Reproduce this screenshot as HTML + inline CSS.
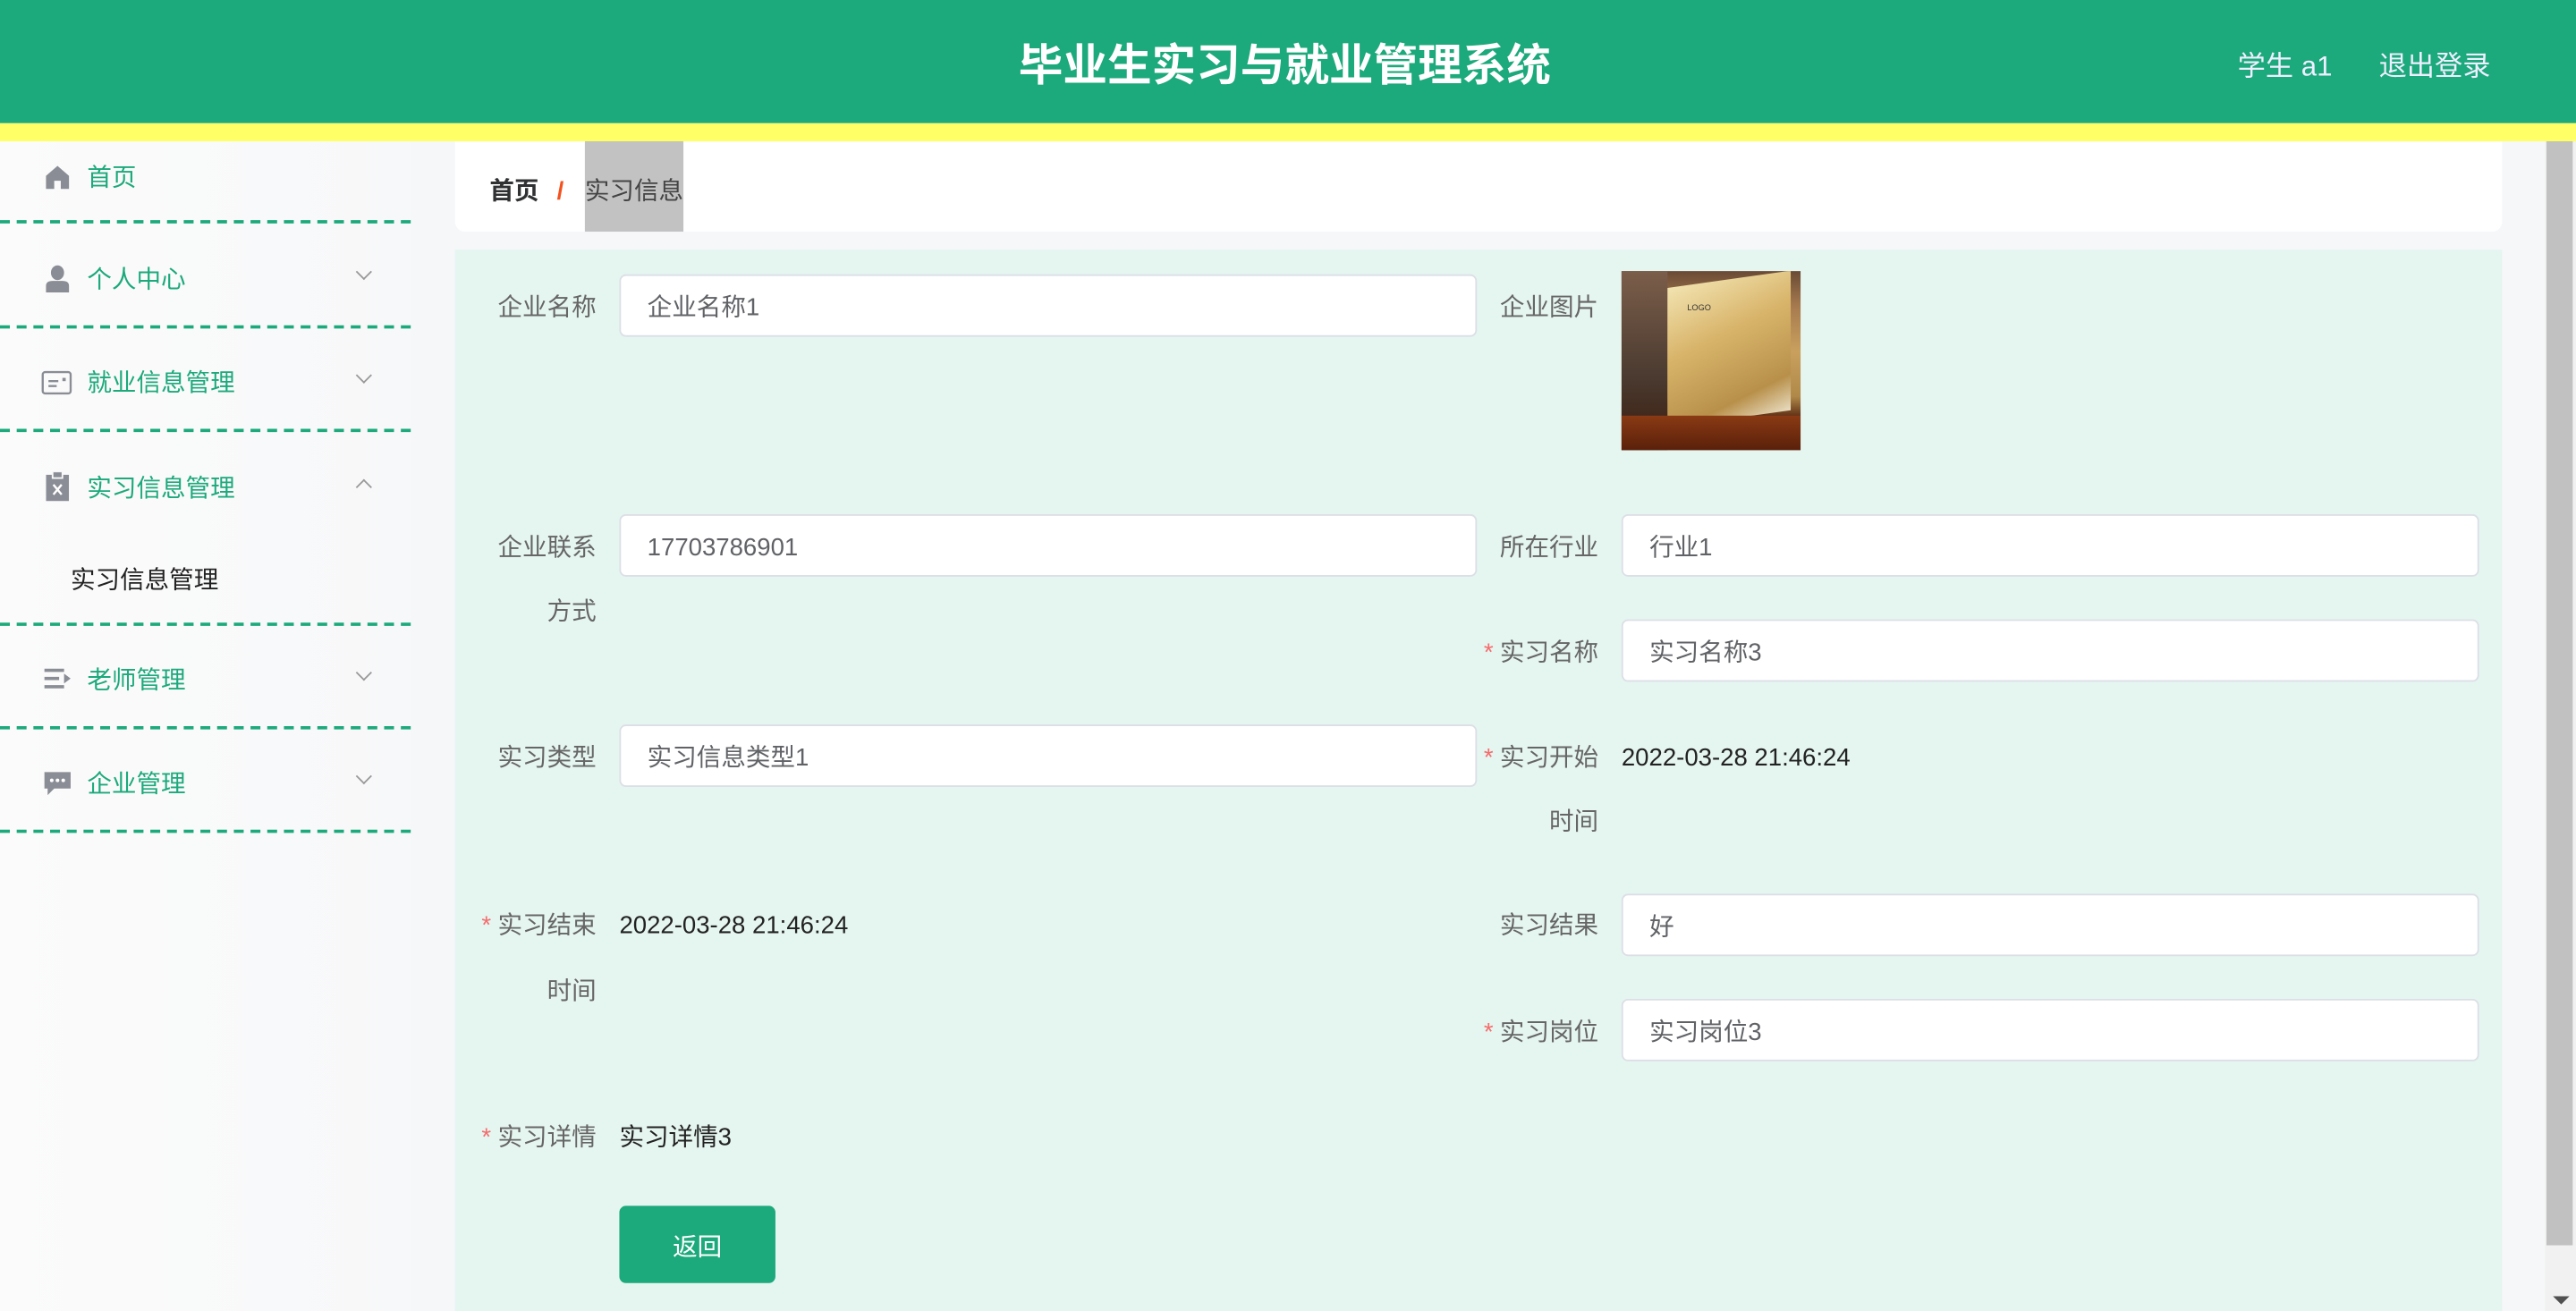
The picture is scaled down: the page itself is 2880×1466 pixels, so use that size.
<!DOCTYPE html>
<html><head><meta charset="utf-8"><style>
*{margin:0;padding:0;box-sizing:border-box}
html,body{width:2880px;height:1466px;overflow:hidden;background:#f5f7f9}
#w{position:absolute;left:0;top:0;width:1568px;height:798px;transform:scale(1.83673,1.8371);transform-origin:0 0;font-family:"Liberation Sans","Noto Sans CJK SC",sans-serif;background:#f5f7f9}
.a{position:absolute;white-space:nowrap}
.hd{left:0;top:0;width:1568px;height:75px;background:#1ca97b}
.ys{left:0;top:75px;width:1568px;height:11px;background:#ffff66}
.sb{left:0;top:86px;width:250px;height:712px;background:linear-gradient(90deg,#fbfbfb,#f7f8f9)}
.mi{font-size:15px;color:#1ca97b;line-height:20px;padding-top:2px}
.dl{left:0;width:250px;height:0;border-top:2px dashed #1ca97b}
.ch{width:7px;height:7px;border-right:1px solid #999;border-bottom:1px solid #999;transform:rotate(45deg)}
.lb{font-size:15px;color:#666;line-height:20px;text-align:right;padding-top:2px}
.st{color:#f56c6c;margin-right:4px}
.in{height:38px;background:#fff;border:1px solid #dcdfe6;border-radius:4px;font-size:15px;color:#606266;padding-left:16px;padding-top:3px;line-height:34px}
.tx{font-size:15px;color:#222;line-height:20px;padding-top:2px}
</style></head><body><div id="w">
<div class="a hd"></div>
<div class="a" style="left:0;top:22px;width:1568px;text-align:center;font-size:27px;font-weight:bold;color:#fff;line-height:36px;padding-right:4px">毕业生实习与就业管理系统</div>
<div class="a" style="left:1362px;top:30px;font-size:17px;color:#eef;line-height:22px">学生 a1</div>
<div class="a" style="left:1448px;top:30px;font-size:17px;color:#eef;line-height:22px">退出登录</div>
<div class="a ys"></div>
<div class="a sb"></div>

<svg class="a" style="left:27px;top:100px" width="16" height="16" viewBox="0 0 16 16"><path d="M8 1 L15 7 V15 H10 V10 H6 V15 H1 V7 Z" fill="#8a8d95"/></svg>
<div class="a mi" style="left:53px;top:97px">首页</div>
<div class="a dl" style="top:134px"></div>

<svg class="a" style="left:27px;top:161px" width="16" height="17" viewBox="0 0 16 17"><ellipse cx="8" cy="5" rx="4" ry="4.5" fill="#8a8d95"/><path d="M1 17 V13 Q1 10 5 10 H11 Q15 10 15 13 V17Z" fill="#8a8d95"/></svg>
<div class="a mi" style="left:53px;top:159px">个人中心</div>
<div class="a ch" style="left:218px;top:162px"></div>
<div class="a dl" style="top:198px"></div>

<svg class="a" style="left:25px;top:225px" width="19" height="16" viewBox="0 0 19 16"><rect x="1" y="1.5" width="17" height="13" rx="1.5" fill="none" stroke="#8a8d95" stroke-width="1.3"/><path d="M4.5 7h6M4.5 10h5" stroke="#8a8d95" stroke-width="1.3"/><rect x="13" y="5" width="2" height="2" fill="#8a8d95"/></svg>
<div class="a mi" style="left:53px;top:222px">就业信息管理</div>
<div class="a ch" style="left:218px;top:225px"></div>
<div class="a dl" style="top:261px"></div>

<svg class="a" style="left:28px;top:287px" width="14" height="18" viewBox="0 0 14 18"><rect x="0" y="2" width="14" height="16" fill="#8a8d95"/><rect x="4" y="0" width="6" height="4" fill="#8a8d95" stroke="#fafafa" stroke-width="1"/><path d="M4.5 8l5 6M9.5 8l-5 6" stroke="#fff" stroke-width="1.3"/></svg>
<div class="a mi" style="left:53px;top:286px">实习信息管理</div>
<div class="a ch" style="left:218px;top:293px;transform:rotate(225deg)"></div>
<div class="a" style="left:43px;top:344px;font-size:15px;color:#222;line-height:20px">实习信息管理</div>
<div class="a dl" style="top:379px"></div>

<svg class="a" style="left:27px;top:406px" width="16" height="14" viewBox="0 0 16 14"><path d="M0 2h12M0 7h9M0 12h12" stroke="#8a8d95" stroke-width="2"/><path d="M12 4l4 3-4 3z" fill="#8a8d95"/></svg>
<div class="a mi" style="left:53px;top:403px">老师管理</div>
<div class="a ch" style="left:218px;top:406px"></div>
<div class="a dl" style="top:442px"></div>

<svg class="a" style="left:27px;top:469px" width="16" height="15" viewBox="0 0 16 15"><path d="M0 1h16v10H6l-4 4v-4H0z" fill="#8a8d95"/><circle cx="4.5" cy="6" r="1.1" fill="#fff"/><circle cx="8" cy="6" r="1.1" fill="#fff"/><circle cx="11.5" cy="6" r="1.1" fill="#fff"/></svg>
<div class="a mi" style="left:53px;top:466px">企业管理</div>
<div class="a ch" style="left:218px;top:469px"></div>
<div class="a dl" style="top:505px"></div>

<div class="a" style="left:277px;top:86px;width:1246px;height:55px;background:#fff;border-radius:0 0 6px 6px"></div>
<div class="a" style="left:356px;top:86px;width:60px;height:55px;background:#c2c2c2"></div>
<div class="a" style="left:298px;top:107px;font-size:15px;font-weight:bold;color:#303133;line-height:20px">首页</div>
<div class="a" style="left:339px;top:107px;font-size:15px;font-weight:bold;color:#f4511e;line-height:20px">/</div>
<div class="a" style="left:356px;top:107px;font-size:15px;color:#444;line-height:20px">实习信息</div>

<div class="a" style="left:277px;top:152px;width:1246px;height:646px;background:#e5f5f0"></div>

<div class="a lb" style="left:283px;top:176px;width:80px">企业名称</div>
<div class="a in" style="left:377px;top:167px;width:522px">企业名称1</div>
<div class="a lb" style="left:893px;top:176px;width:80px">企业图片</div>
<div class="a" style="left:987px;top:165px;width:109px;height:109px;overflow:hidden;background:linear-gradient(180deg,#6a4a35 0%,#a77b4f 20%,#c9a05e 45%,#b08848 70%,#5a2a12 82%,#8a3f18 100%)">
 <div class="a" style="left:0;top:0;width:28px;height:109px;background:linear-gradient(180deg,#7b5e4a,#4a3a30 60%,#3a1a0c)"></div>
 <div class="a" style="left:28px;top:5px;width:75px;height:85px;background:linear-gradient(160deg,#f2e3b0,#d8b46a 40%,#b8904a 80%,#e8dcc0);transform:skewY(-8deg)"></div>
 <div class="a" style="left:40px;top:20px;font-size:5px;color:#333">LOGO</div>
 <div class="a" style="left:0;top:88px;width:109px;height:21px;background:linear-gradient(180deg,#8a3a14,#5a200a)"></div>
</div>

<div class="a lb" style="left:283px;top:322px;width:80px">企业联系</div>
<div class="a lb" style="left:283px;top:361px;width:80px">方式</div>
<div class="a in" style="left:377px;top:313px;width:522px">17703786901</div>
<div class="a lb" style="left:893px;top:322px;width:80px">所在行业</div>
<div class="a in" style="left:987px;top:313px;width:522px">行业1</div>
<div class="a lb" style="left:873px;top:386px;width:100px"><span class="st">*</span>实习名称</div>
<div class="a in" style="left:987px;top:377px;width:522px">实习名称3</div>

<div class="a lb" style="left:283px;top:450px;width:80px">实习类型</div>
<div class="a in" style="left:377px;top:441px;width:522px">实习信息类型1</div>
<div class="a lb" style="left:873px;top:450px;width:100px"><span class="st">*</span>实习开始</div>
<div class="a lb" style="left:893px;top:489px;width:80px">时间</div>
<div class="a tx" style="left:987px;top:450px">2022-03-28 21:46:24</div>

<div class="a lb" style="left:263px;top:552px;width:100px"><span class="st">*</span>实习结束</div>
<div class="a lb" style="left:283px;top:592px;width:80px">时间</div>
<div class="a tx" style="left:377px;top:552px">2022-03-28 21:46:24</div>
<div class="a lb" style="left:893px;top:552px;width:80px">实习结果</div>
<div class="a in" style="left:987px;top:544px;width:522px">好</div>
<div class="a lb" style="left:873px;top:617px;width:100px"><span class="st">*</span>实习岗位</div>
<div class="a in" style="left:987px;top:608px;width:522px">实习岗位3</div>

<div class="a lb" style="left:263px;top:681px;width:100px"><span class="st">*</span>实习详情</div>
<div class="a tx" style="left:377px;top:681px">实习详情3</div>

<div class="a" style="left:377px;top:734px;width:95px;height:47px;background:#1ca97b;border-radius:4px;color:#fff;font-size:15px;line-height:47px;padding-top:2px;text-align:center">返回</div>

<div class="a" style="left:1549px;top:86px;width:19px;height:712px;background:#f1f1f1"></div>
<div class="a" style="left:1550px;top:86px;width:16px;height:672px;background:#c1c1c1"></div>
<div class="a" style="left:1554px;top:789px;width:0;height:0;border-left:5px solid transparent;border-right:5px solid transparent;border-top:5px solid #505050"></div>
</div></body></html>
